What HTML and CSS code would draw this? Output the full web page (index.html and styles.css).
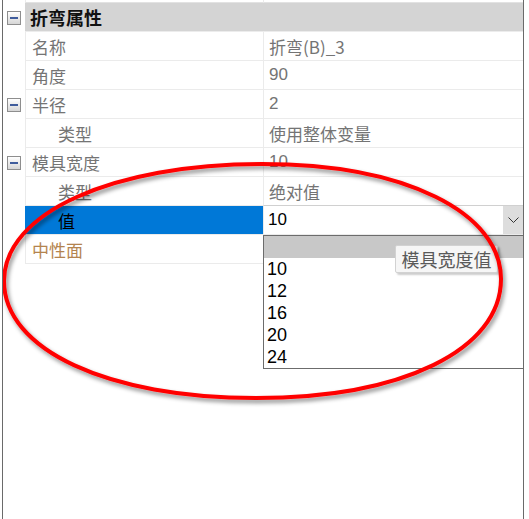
FILE: index.html
```html
<!DOCTYPE html>
<html lang="zh-CN">

<head>
	<meta charset="UTF-8">
	<meta name="viewport" content="width=device-width, initial-scale=1.0">
	<title>折弯属性</title>
	<link rel="stylesheet" href="styles.css">
</head>

<body>
	<div class="frame">
		<div class="row top-strip">
			<div class="gutter"></div>
			<div class="name"></div>
			<div class="value"></div>
		</div>

		<div class="row category">
			<div class="gutter"><span class="toggle"></span></div>
			<div class="cat-title">折弯属性</div>
		</div>

		<div class="row">
			<div class="gutter"></div>
			<div class="name">名称</div>
			<div class="value">折弯(B)_3</div>
		</div>
		<div class="row">
			<div class="gutter"></div>
			<div class="name">角度</div>
			<div class="value num">90</div>
		</div>
		<div class="row">
			<div class="gutter"><span class="toggle"></span></div>
			<div class="name">半径</div>
			<div class="value num">2</div>
		</div>
		<div class="row">
			<div class="gutter"></div>
			<div class="name sub">类型</div>
			<div class="value">使用整体变量</div>
		</div>
		<div class="row">
			<div class="gutter"><span class="toggle"></span></div>
			<div class="name">模具宽度</div>
			<div class="value num">10</div>
		</div>
		<div class="row">
			<div class="gutter"></div>
			<div class="name sub">类型</div>
			<div class="value">绝对值</div>
		</div>
		<div class="row selected">
			<div class="gutter"></div>
			<div class="name sub">值</div>
			<div class="value combo">
				<span class="combo-text">10</span>
				<span class="combo-btn">
					<svg width="11" height="7" viewBox="0 0 11 7">
						<polyline points="0.5,0.5 5.5,5.5 10.5,0.5" fill="none" stroke="#333" stroke-width="1"/>
					</svg>
				</span>
			</div>
		</div>
		<div class="row">
			<div class="gutter"></div>
			<div class="name neutral">中性面</div>
			<div class="value"></div>
		</div>

		<!-- open drop-down of the combo -->
		<div class="dropdown">
			<div class="dd-item dd-current"></div>
			<div class="dd-item">10</div>
			<div class="dd-item">12</div>
			<div class="dd-item">16</div>
			<div class="dd-item">20</div>
			<div class="dd-item">24</div>
		</div>

		<div class="tooltip">模具宽度值</div>

		<!-- red hand-drawn mark -->
		<svg class="mark" width="529" height="519" viewBox="0 0 529 519">
			<defs>
				<filter id="shadow" x="-10%" y="-10%" width="120%" height="130%">
					<feDropShadow dx="2" dy="3" stdDeviation="2" flood-color="#000" flood-opacity="0.45"/>
				</filter>
			</defs>
			<path d="M4,281 C4,213 112,164 262,164 C406,164 501,213 501,279 C501,350 402,398 256,398 C108,398 4,350 4,281 Z"
				fill="none" stroke="#ff0000" stroke-width="4" filter="url(#shadow)"/>
		</svg>
	</div>
</body>

</html>
```

FILE: styles.css
```css
* {
	box-sizing: border-box;
}

body {
	margin: 0;
	background: #fff;
	font-family: "Noto Sans CJK SC", sans-serif;
}

.frame {
	position: relative;
	width: 522px;
	height: 519px;
	margin-left: 2px;
	border-left: 1px solid #6a6a6a;
	border-right: 1px solid #6a6a6a;
	overflow: hidden;
}

.row {
	display: flex;
	height: 29px;
}

.gutter {
	width: 22px;
	flex: none;
	display: flex;
	align-items: center;
	padding-left: 4px;
}

.name {
	width: 238px;
	flex: none;
	display: flex;
	align-items: center;
	padding-left: 6px;
	border-left: 1px solid #ebebeb;
	border-bottom: 1px solid #ebebeb;
	color: #747474;
	font-size: 17px;
}

.name.sub {
	padding-left: 32px;
}

.name.neutral {
	color: #b4844f;
}

.value {
	flex: 1;
	display: flex;
	align-items: center;
	padding-left: 5px;
	border-left: 1px solid #ebebeb;
	border-bottom: 1px solid #ebebeb;
	color: #747474;
	font-size: 17px;
}

.num {
	font-family: "Liberation Sans", sans-serif;
}

.top-strip {
	height: 3px;
}

.top-strip .name,
.top-strip .value {
	border-bottom-color: #e2e2e2;
}

.category .cat-title {
	flex: 1;
	display: flex;
	align-items: center;
	padding-left: 5px;
	background: #d4d4d4;
	border-bottom: 1px solid #ececec;
	font-size: 18px;
	font-weight: bold;
	color: #111;
}

.toggle {
	position: relative;
	width: 14px;
	height: 14px;
	border: 1px solid #8e8e8e;
	background: linear-gradient(#ffffff, #d6d6d6);
}

.toggle::after {
	content: "";
	position: absolute;
	left: 2px;
	top: 5px;
	width: 8px;
	height: 2px;
	background: #3f5c9c;
}

.selected .name {
	background: #0078d7;
	color: #000;
	border-left-color: #0078d7;
}

.combo {
	padding-left: 0;
	border-top: 1px solid #d0d0d0;
	margin-top: -1px;
	height: 30px;
}

.combo-text {
	flex: 1;
	padding-left: 4px;
	color: #000;
	font-family: "Liberation Sans", sans-serif;
	font-size: 17px;
}

.combo-btn {
	width: 20px;
	height: 100%;
	display: flex;
	align-items: center;
	justify-content: center;
	background: #dddddd;
}

.dropdown {
	position: absolute;
	left: 260px;
	top: 235px;
	width: 261px;
	border: 1px solid #6c6c6c;
	background: #fff;
}

.dd-item {
	height: 22px;
	padding-left: 3px;
	display: flex;
	align-items: center;
	color: #000;
	font-family: "Liberation Sans", sans-serif;
	font-size: 18px;
}

.dd-current {
	background: #c8c8c8;
}

.tooltip {
	position: absolute;
	left: 392px;
	top: 245px;
	width: 103px;
	height: 28px;
	display: flex;
	align-items: center;
	justify-content: center;
	background: #f6f6f6;
	border: 1px solid #d2d2d2;
	border-radius: 2px;
	box-shadow: 2px 2px 2px rgba(0, 0, 0, 0.2);
	color: #5a5a5a;
	font-size: 18px;
}

.mark {
	position: absolute;
	left: -3px;
	top: 0;
	pointer-events: none;
	overflow: visible;
}
```
